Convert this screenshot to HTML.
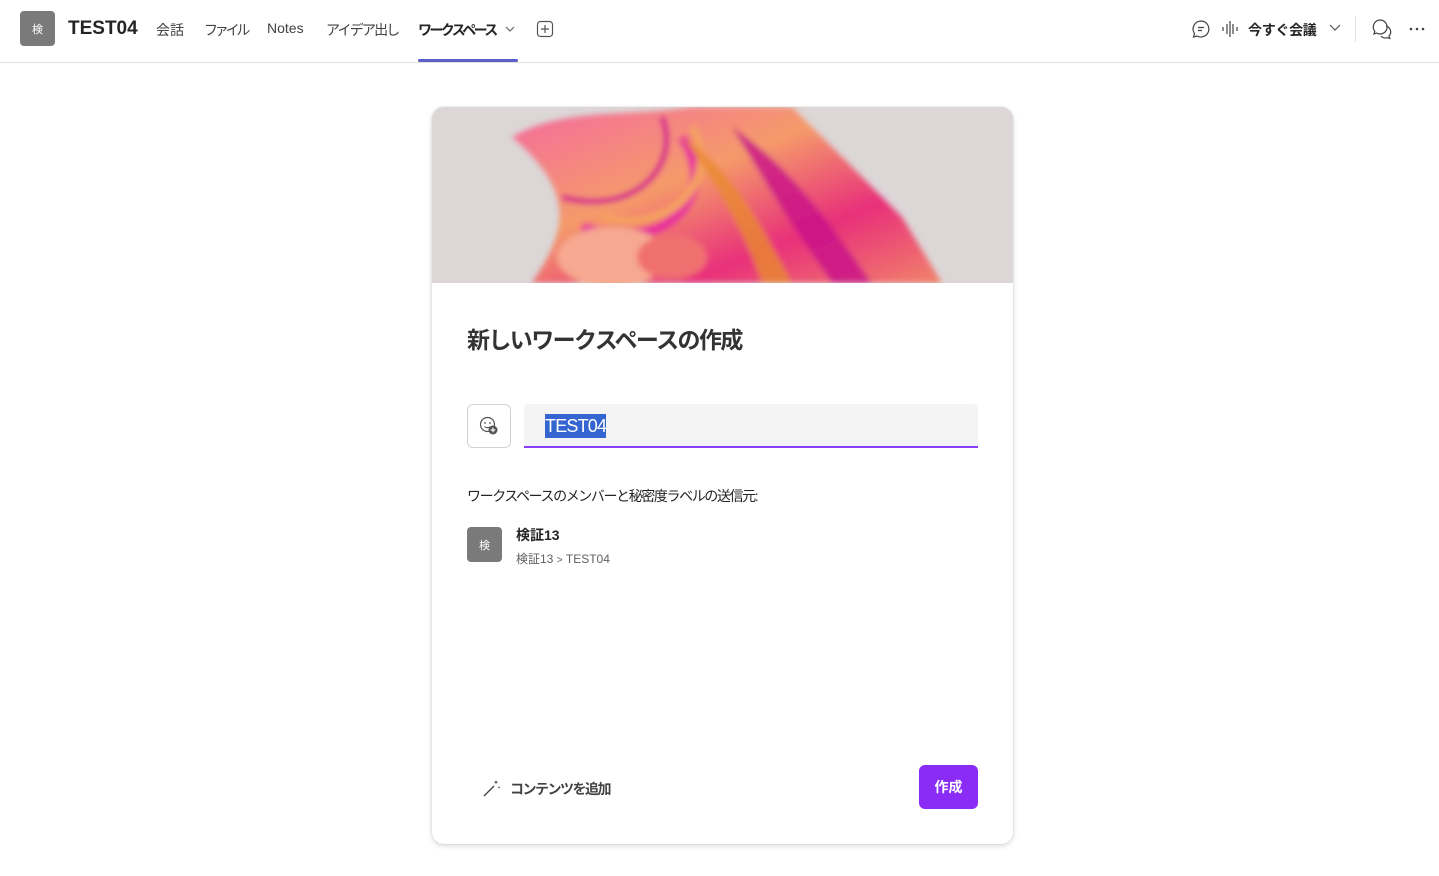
<!DOCTYPE html>
<html><head><meta charset="utf-8"><style>
*{box-sizing:border-box;margin:0;padding:0}
body{width:1439px;height:876px;background:#fff;font-family:"Liberation Sans","Noto Sans CJK JP",sans-serif;color:#242424;position:relative;overflow:hidden}
.top{position:absolute;left:0;top:0;width:1439px;height:63px;border-bottom:1px solid #e0e0e0}
.av{position:absolute;background:#7a7a7a;color:#fff;border-radius:4px;display:flex;align-items:center;justify-content:center;font-size:11px}
.t{position:absolute;font-size:14px;color:#424242;top:20px;white-space:nowrap}
.card{position:absolute;left:432px;top:107px;width:581px;height:737px;border-radius:12px;background:#fff;box-shadow:0 2px 6px rgba(0,0,0,.14),0 0 2px rgba(0,0,0,.12);overflow:hidden}
</style></head><body>
<div class="top">
<div class="av" style="left:20px;top:11px;width:35px;height:35px">検</div>
<div style="position:absolute;left:68px;top:18px;font-size:19px;font-weight:bold;color:#242424">TEST04</div>
<div class="t" style="left:156px">会話</div>
<div class="t" style="left:204px;letter-spacing:-3.2px">ファイル</div>
<div class="t" style="left:267px">Notes</div>
<div class="t" style="left:326px;letter-spacing:-1.8px">アイデア出し</div>
<div class="t" style="left:418px;font-weight:bold;color:#242424;letter-spacing:-2.6px">ワークスペース</div>
<svg style="position:absolute;left:505px;top:24px" width="10" height="10"><path d="M1 3l4 4 4-4" fill="none" stroke="#666" stroke-width="1.2"/></svg>
<div style="position:absolute;left:418px;top:59px;width:100px;height:3px;background:#5b5fc7;border-radius:2px"></div>
<svg style="position:absolute;left:536px;top:20px" width="18" height="18"><rect x="1.5" y="1.5" width="15" height="15" rx="3" fill="none" stroke="#555" stroke-width="1.2"/><path d="M9 5v8M5 9h8" stroke="#555" stroke-width="1.2"/></svg>
<svg style="position:absolute;left:1191px;top:19px" width="20" height="20"><path d="M10 2a8 8 0 1 1-4 15l-3.5 1 1-3.5A8 8 0 0 1 10 2z" fill="none" stroke="#424242" stroke-width="1.2"/><path d="M7 8.5h6M7 11.5h4" stroke="#424242" stroke-width="1.2"/></svg>
<svg style="position:absolute;left:1221px;top:20px" width="18" height="18"><path d="M2 7v4M6 4v10M9 1v16M12 4v10M16 7v4" stroke="#424242" stroke-width="1.2"/></svg>
<div class="t" style="left:1248px;font-weight:bold;color:#242424;letter-spacing:-0.3px">今すぐ会議</div>
<svg style="position:absolute;left:1329px;top:23px" width="12" height="10"><path d="M1 2l5 5 5-5" fill="none" stroke="#555" stroke-width="1.2"/></svg>
<div style="position:absolute;left:1355px;top:16px;width:1px;height:26px;background:#e0e0e0"></div>
<svg style="position:absolute;left:1371px;top:18px" width="22" height="22"><path d="M9 2a7 7 0 1 1-3.5 13L3 16l.8-2.7A7 7 0 0 1 9 2z" fill="none" stroke="#424242" stroke-width="1.2"/><path d="M15 8a6 6 0 0 1 3 10l.8 2.5-2.6-.8A6 6 0 0 1 10 18" fill="none" stroke="#424242" stroke-width="1.2"/></svg>
<svg style="position:absolute;left:1409px;top:27px" width="16" height="4"><circle cx="2" cy="2" r="1.3" fill="#424242"/><circle cx="8" cy="2" r="1.3" fill="#424242"/><circle cx="14" cy="2" r="1.3" fill="#424242"/></svg>
</div>

<div class="card">
<svg width="581" height="176" style="display:block">
<defs><filter id="b"><feGaussianBlur stdDeviation="3"/></filter>
<linearGradient id="g1" x1="0" y1="0" x2="1" y2="1"><stop offset="0" stop-color="#f46aa0"/><stop offset=".4" stop-color="#f59a6a"/><stop offset=".7" stop-color="#e8307a"/><stop offset="1" stop-color="#f2836a"/></linearGradient></defs>
<rect width="581" height="176" fill="#dcd6d7"/>
<g filter="url(#b)">
<path d="M80 30 C130 0 200 10 260 0 L360 0 C400 40 440 80 470 110 L510 176 L100 176 C130 130 150 90 80 30z" fill="url(#g1)"/>
<path d="M150 120 C230 150 290 90 250 30" fill="none" stroke="#e8309a" stroke-width="10"/>
<path d="M170 110 C240 130 290 70 260 20" fill="none" stroke="#f5a060" stroke-width="8"/>
<path d="M130 90 C200 110 250 60 230 10" fill="none" stroke="#d8208a" stroke-width="6"/>
<path d="M300 20 C360 60 400 120 440 176 L400 176 C360 120 330 70 300 20z" fill="#c8108a" opacity=".8"/>
<path d="M250 30 C300 60 330 120 360 176 L330 176 C310 120 280 70 250 30z" fill="#e88a30" opacity=".8"/>
<ellipse cx="180" cy="150" rx="55" ry="30" fill="#f6a890"/>
<ellipse cx="240" cy="150" rx="35" ry="22" fill="#f07070"/>
</g>
</svg>
<div style="position:absolute;left:35px;top:214px;font-size:23px;font-weight:bold;color:#333;letter-spacing:-1.6px">新しいワークスペースの作成</div>
<div style="position:absolute;left:35px;top:297px;width:44px;height:44px;border:1px solid #d1d1d1;border-radius:6px"></div>
<svg style="position:absolute;left:47px;top:309px" width="20" height="20"><circle cx="8.5" cy="8.5" r="7" fill="none" stroke="#555" stroke-width="1.2"/><circle cx="6" cy="7" r=".9" fill="#555"/><circle cx="11" cy="7" r=".9" fill="#555"/><path d="M5.5 10.5q3 2.5 6 0" fill="none" stroke="#555" stroke-width="1.1"/><circle cx="14" cy="14" r="4.5" fill="#555"/><path d="M14 11.7v4.6M11.7 14h4.6" stroke="#fff" stroke-width="1.2"/></svg>
<div style="position:absolute;left:92px;top:297px;width:454px;height:44px;background:#f4f4f4;border-radius:4px 4px 0 0;border-bottom:2px solid #8a3ffc"></div>
<div style="position:absolute;left:113px;top:307px;height:24px;background:#3465d0;color:#fff;font-size:18px;line-height:24px;letter-spacing:-0.8px">TEST04</div>
<div style="position:absolute;left:35px;top:379px;font-size:14px;color:#242424;letter-spacing:-1.4px">ワークスペースのメンバーと秘密度ラベルの送信元:</div>
<div class="av" style="left:35px;top:420px;width:35px;height:35px">検</div>
<div style="position:absolute;left:84px;top:418px;font-size:14px;font-weight:bold">検証13</div>
<div style="position:absolute;left:84px;top:443px;font-size:12px;color:#616161">検証13 <span style="font-size:10px">&gt;</span> TEST04</div>
<svg style="position:absolute;left:50px;top:671px" width="20" height="20"><path d="M2 18L12 8" stroke="#424242" stroke-width="1.3"/><path d="M14 2l.6 1.6 1.6.6-1.6.6L14 6.4l-.6-1.6-1.6-.6 1.6-.6z M17 8l.4 1 1 .4-1 .4-.4 1-.4-1-1-.4 1-.4z" fill="#424242"/></svg>
<div style="position:absolute;left:78px;top:672px;font-size:14px;font-weight:bold;color:#424242;letter-spacing:-1.5px">コンテンツを追加</div>
<div style="position:absolute;left:487px;top:658px;width:59px;height:44px;background:#8a2cf5;border-radius:6px;color:#fff;font-size:14px;font-weight:bold;display:flex;align-items:center;justify-content:center">作成</div>
</div>
</body></html>
